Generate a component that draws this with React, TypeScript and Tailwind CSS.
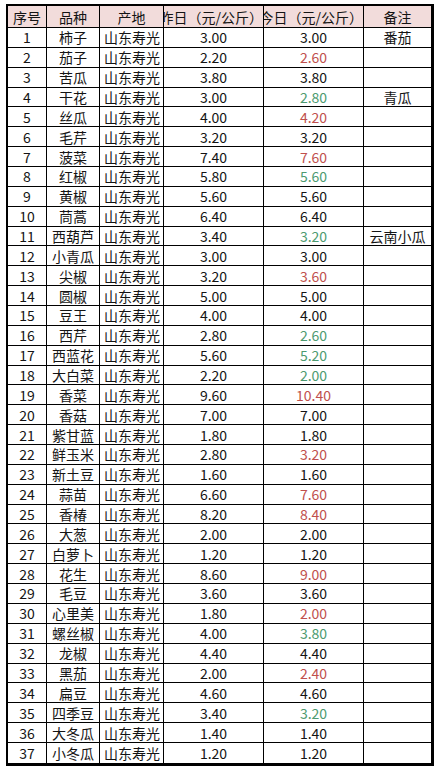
import React from 'react';

type Row = [string, string, string, 'up' | 'down' | 'same', string?];

const rows: Row[] = [
    ['柿子', '3.00', '3.00', 'same', '番茄'],
    ['茄子', '2.20', '2.60', 'up'],
    ['苦瓜', '3.80', '3.80', 'same'],
    ['干花', '3.00', '2.80', 'down', '青瓜'],
    ['丝瓜', '4.00', '4.20', 'up'],
    ['毛芹', '3.20', '3.20', 'same'],
    ['菠菜', '7.40', '7.60', 'up'],
    ['红椒', '5.80', '5.60', 'down'],
    ['黄椒', '5.60', '5.60', 'same'],
    ['茼蒿', '6.40', '6.40', 'same'],
    ['西葫芦', '3.40', '3.20', 'down', '云南小瓜'],
    ['小青瓜', '3.00', '3.00', 'same'],
    ['尖椒', '3.20', '3.60', 'up'],
    ['圆椒', '5.00', '5.00', 'same'],
    ['豆王', '4.00', '4.00', 'same'],
    ['西芹', '2.80', '2.60', 'down'],
    ['西蓝花', '5.60', '5.20', 'down'],
    ['大白菜', '2.20', '2.00', 'down'],
    ['香菜', '9.60', '10.40', 'up'],
    ['香菇', '7.00', '7.00', 'same'],
    ['紫甘蓝', '1.80', '1.80', 'same'],
    ['鲜玉米', '2.80', '3.20', 'up'],
    ['新土豆', '1.60', '1.60', 'same'],
    ['蒜苗', '6.60', '7.60', 'up'],
    ['香椿', '8.20', '8.40', 'up'],
    ['大葱', '2.00', '2.00', 'same'],
    ['白萝卜', '1.20', '1.20', 'same'],
    ['花生', '8.60', '9.00', 'up'],
    ['毛豆', '3.60', '3.60', 'same'],
    ['心里美', '1.80', '2.00', 'up'],
    ['螺丝椒', '4.00', '3.80', 'down'],
    ['龙椒', '4.40', '4.40', 'same'],
    ['黑茄', '2.00', '2.40', 'up'],
    ['扁豆', '4.60', '4.60', 'same'],
    ['四季豆', '3.40', '3.20', 'down'],
    ['大冬瓜', '1.40', '1.40', 'same'],
    ['小冬瓜', '1.20', '1.20', 'same'],
];

const cols = 'grid grid-cols-[39px_53px_64px_100px_100px_67px]';
const cell =
    'flex items-center justify-center overflow-hidden whitespace-nowrap border-r border-black';

export default function App() {
    return (
        <div className="min-h-[768px] bg-white pl-[6px] pt-[4px] font-['Noto_Sans_CJK_SC',sans-serif] text-[14px] leading-none text-[#141414]">
            <div className="w-[428px] border-b-[3px] border-l-2 border-r-[3px] border-t-2 border-black">
                {/* header */}
                <div className={`${cols} h-[22px] border-b border-black bg-[#f2dcdb]`}>
                    <div className={cell}>序号</div>
                    <div className={cell}>品种</div>
                    <div className={cell}>产地</div>
                    <div className={`${cell} justify-end`}>
                        <span className="shrink-0">昨日（元/公斤）</span>
                    </div>
                    <div className={`${cell} justify-end`}>
                        <span className="shrink-0">今日（元/公斤）</span>
                    </div>
                    <div className="flex items-center justify-center">备注</div>
                </div>
                {rows.map(([name, prev, today, trend, note], i) => (
                    <div
                        key={i}
                        className={`${cols} h-[19.86px] ${
                            i < rows.length - 1 ? 'border-b border-black' : ''
                        }`}
                    >
                        <div className={cell}>{i + 1}</div>
                        <div className={cell}>{name}</div>
                        <div className={`${cell} justify-start pl-[4px]`}>
                            山东寿光
                        </div>
                        <div className={cell}>{prev}</div>
                        <div
                            className={`${cell} ${
                                trend === 'up'
                                    ? 'text-[#c0504d]'
                                    : trend === 'down'
                                      ? 'text-[#4d9a70]'
                                      : ''
                            }`}
                        >
                            {today}
                        </div>
                        <div className="flex items-center justify-center whitespace-nowrap">
                            {note}
                        </div>
                    </div>
                ))}
            </div>
        </div>
    );
}
